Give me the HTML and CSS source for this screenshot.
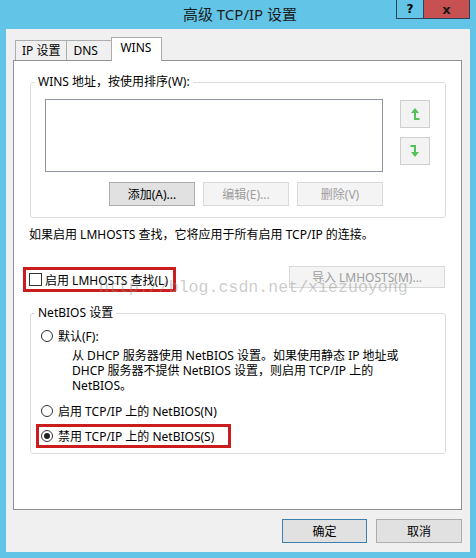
FILE: index.html
```html
<!DOCTYPE html>
<html lang="zh-CN">
<head>
    <meta charset="UTF-8">
    <title>高级 TCP/IP 设置</title>
    <link rel="stylesheet" href="styles.css">
</head>
<body>
    <div class="window">
        <div class="titlebar">
            <span></span>
            <div class="title">高级 TCP/IP 设置</div>
            <div class="caption-btns">
                <span class="help">?</span>
                <span class="close">x</span>
            </div>
        </div>

        <div class="client">
            <div class="tabs">
                <div class="tab">IP 设置</div>
                <div class="tab">DNS</div>
                <div class="tab active">WINS</div>
            </div>

            <div class="panel">
                <fieldset class="group wins">
                    <legend>WINS 地址，按使用排序(W):</legend>
                    <div class="wins-body">
                        <div class="wins-main">
                            <div class="listbox"></div>
                            <div class="btn-row">
                                <button class="btn">添加(A)...</button>
                                <button class="btn disabled">编辑(E)...</button>
                                <button class="btn disabled">删除(V)</button>
                            </div>
                        </div>
                        <div class="arrows">
                            <button class="arrow-btn">
                                <svg width="12" height="14" viewBox="0 0 12 14">
                                    <path d="M6 5 V12 H10.5" fill="none" stroke="#55c15a" stroke-width="2"/>
                                    <path d="M6 1 L2 6 H10 Z" fill="#55c15a"/>
                                </svg>
                            </button>
                            <button class="arrow-btn">
                                <svg width="12" height="14" viewBox="0 0 12 14">
                                    <path d="M1.5 2 H6 V9" fill="none" stroke="#55c15a" stroke-width="2"/>
                                    <path d="M2 8 H10 L6 13 Z" fill="#55c15a"/>
                                </svg>
                            </button>
                        </div>
                    </div>
                </fieldset>

                <p class="note">如果启用 LMHOSTS 查找，它将应用于所有启用 TCP/IP 的连接。</p>

                <div class="lm-row">
                    <label class="mark">
                        <span class="checkbox"></span>
                        启用 LMHOSTS 查找(L)
                    </label>
                    <button class="btn disabled import">导入 LMHOSTS(M)...</button>
                    <span class="watermark">http://blog.csdn.net/xiezuoyong</span>
                </div>

                <fieldset class="group netbios">
                    <legend>NetBIOS 设置</legend>
                    <div class="netbios-body">
                        <label class="radio-row"><span class="radio"></span>默认(F):</label>
                        <p class="desc">从 DHCP 服务器使用 NetBIOS 设置。如果使用静态 IP 地址或<br>DHCP 服务器不提供 NetBIOS 设置，则启用 TCP/IP 上的<br>NetBIOS。</p>
                        <label class="radio-row second"><span class="radio"></span>启用 TCP/IP 上的 NetBIOS(N)</label>
                        <label class="radio-row mark third"><span class="radio checked"></span>禁用 TCP/IP 上的 NetBIOS(S)</label>
                    </div>
                </fieldset>
            </div>

            <div class="dialog-btns">
                <button class="btn default">确定</button>
                <button class="btn">取消</button>
            </div>
        </div>
    </div>
</body>
</html>
```

FILE: styles.css
```css
* {
    margin: 0;
    padding: 0;
    box-sizing: border-box;
}

body {
    font-family: "Noto Sans", "Noto Sans CJK SC", sans-serif;
    font-size: 12px;
    color: #000;
    background: #62c5e7;
    width: 476px;
    height: 558px;
    overflow: hidden;
}

/* title bar */
.titlebar {
    height: 29px;
    display: grid;
    grid-template-columns: 1fr auto 1fr;
}

.title {
    font-size: 15px;
    line-height: 29px;
    color: #1c1c1c;
    padding-left: 4px;
}

.caption-btns {
    justify-self: end;
    margin-right: 6px;
    display: flex;
    height: 19px;
    border: 1px solid #2a4656;
    border-top: none;
}

.caption-btns span {
    display: flex;
    align-items: center;
    justify-content: center;
    font-weight: bold;
    font-family: "DejaVu Sans", sans-serif;
}

.help {
    width: 27px;
    font-size: 12px;
    border-right: 1px solid #2a4656;
}

.close {
    width: 45px;
    background: #c75050;
    font-size: 13px;
    color: #1a1a1a;
}

/* client area */
.client {
    margin: 0 6px;
    height: 523px;
    background: #f0f0f0;
    padding: 8px 8px 0 7px;
}

.tabs {
    display: flex;
    align-items: flex-end;
    height: 23px;
    padding-left: 2px;
}

.tab {
    height: 20px;
    line-height: 19px;
    padding: 0 6px;
    min-width: 46px;
    border: 1px solid #acacac;
    border-bottom: none;
    background: #f0f0f0;
    margin-right: -1px;
}

.tab.active {
    height: 24px;
    line-height: 20px;
    padding: 0 8px;
    min-width: 51px;
    background: #fff;
    margin-bottom: -1px;
    position: relative;
    z-index: 1;
}

.panel {
    height: 450px;
    background: #fff;
    border: 1px solid #8e9096;
    padding: 0 15px 0 16px;
}

/* group boxes */
.group {
    border: 1px solid #dcdcdc;
    border-radius: 3px;
    padding: 0;
    min-width: 0;
}

.group legend {
    margin-left: 4px;
    padding: 0 3px;
    line-height: 16px;
}

.wins {
    margin-top: 13px;
}

.wins-body {
    display: grid;
    grid-template-columns: 338px 30px;
    column-gap: 17px;
    padding: 9px 15px 11px 14px;
}

.listbox {
    height: 73px;
    border: 1px solid #8f959c;
    background: #fff;
}

.btn-row {
    display: flex;
    justify-content: flex-end;
    gap: 8px;
    margin-top: 10px;
}

.btn {
    font: inherit;
    color: #000;
    height: 24px;
    width: 86px;
    background: #e1e1e1;
    border: 1px solid #adadad;
}

.btn.disabled {
    background: #f4f4f4;
    border-color: #d9d9d9;
    color: #9d9d9d;
}

.arrows {
    display: flex;
    flex-direction: column;
    gap: 9px;
    padding-top: 1px;
}

.arrow-btn {
    width: 30px;
    height: 28px;
    background: #f3f3f3;
    border: 1px solid #cfcfcf;
    display: flex;
    align-items: center;
    justify-content: center;
}

.note {
    margin: 9px 0 0 -1px;
    line-height: 16px;
}

/* lmhosts row */
.lm-row {
    position: relative;
    display: flex;
    justify-content: space-between;
    align-items: flex-start;
    margin: 23px 0 0 -7px;
}

.mark {
    display: flex;
    align-items: center;
    border: 3px solid #cc1d1e;
}

.lm-row .mark {
    margin-top: 1px;
    height: 25px;
    padding: 0 5px 0 3px;
    gap: 3px;
}

.checkbox {
    width: 13px;
    height: 13px;
    border: 1px solid #333;
    background: #fff;
}

.import {
    width: 156px;
    height: 22px;
    margin-right: 1px;
}

.watermark {
    position: absolute;
    left: 76px;
    top: 12px;
    font-family: "Liberation Mono", monospace;
    font-size: 16.6px;
    line-height: 20px;
    color: rgba(140, 140, 140, 0.45);
    pointer-events: none;
}

/* netbios */
.netbios {
    margin-top: 13px;
}

.netbios-body {
    padding: 7px 15px 5px 10px;
}

.radio-row {
    display: flex;
    align-items: center;
    gap: 5px;
    height: 16px;
}

.radio {
    width: 12px;
    height: 12px;
    border: 1px solid #333;
    border-radius: 50%;
    background: #fff;
    display: flex;
    align-items: center;
    justify-content: center;
}

.radio.checked::after {
    content: "";
    width: 6px;
    height: 6px;
    border-radius: 50%;
    background: #222;
}

.desc {
    margin-top: 4px;
    padding-left: 31px;
    line-height: 15px;
}

.radio-row.second {
    margin-top: 10px;
}

.radio-row.third {
    margin: 5px 0 0 -5px;
    width: 195px;
    height: 24px;
    padding-left: 2px;
}

/* dialog buttons */
.dialog-btns {
    display: flex;
    justify-content: flex-end;
    gap: 9px;
    margin-top: 9px;
}

.dialog-btns .btn {
    width: 86px;
}

.btn.default {
    width: 85px;
    border-color: #3b7fb3;
}
```
